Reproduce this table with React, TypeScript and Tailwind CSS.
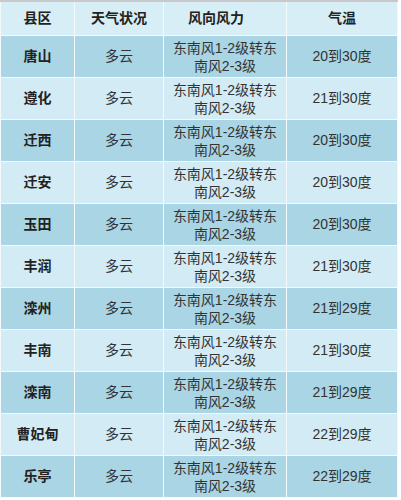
import React from "react";

const rows: [string, string, string][] = [
  ["唐山", "多云", "20到30度"],
  ["遵化", "多云", "21到30度"],
  ["迁西", "多云", "20到30度"],
  ["迁安", "多云", "20到30度"],
  ["玉田", "多云", "20到30度"],
  ["丰润", "多云", "21到30度"],
  ["滦州", "多云", "21到29度"],
  ["丰南", "多云", "21到30度"],
  ["滦南", "多云", "21到29度"],
  ["曹妃甸", "多云", "22到29度"],
  ["乐亭", "多云", "22到29度"],
];

export default function App() {
  return (
    <div
      className="w-[401px] h-[500px] bg-white overflow-hidden"
      style={{ fontFamily: '"Liberation Sans", "Noto Sans CJK SC", sans-serif' }}
    >
      <div className="w-[398px] border-t-2 border-[#c9c9c9] bg-[#f4f9fb] grid grid-cols-[73px_88px_122px_110px] gap-px p-px pt-0 text-[14px] text-[#333]">
        <div className="h-[33px] bg-[#d8eef6] flex items-center justify-center font-bold text-[#222]">县区</div>
        <div className="h-[33px] bg-[#d8eef6] flex items-center justify-center font-bold text-[#222]">天气状况</div>
        <div className="h-[33px] bg-[#d8eef6] flex items-center justify-center font-bold text-[#222] pr-[18px]">风向风力</div>
        <div className="h-[33px] bg-[#d8eef6] flex items-center justify-center font-bold text-[#222]">气温</div>
        {rows.map(([name, weather, temp], i) => {
          const bg = i % 2 === 0 ? "bg-[#a9d5e4]" : "bg-[#d3ebf4]";
          return (
            <React.Fragment key={name}>
              <div className={`h-[41px] ${bg} flex items-center justify-center font-bold text-[#222]`}>{name}</div>
              <div className={`h-[41px] ${bg} flex items-center justify-center`}>{weather}</div>
              <div className={`h-[41px] ${bg} flex flex-col items-center justify-center leading-[18px]`}>
                <span>东南风1-2级转东</span>
                <span>南风2-3级</span>
              </div>
              <div className={`h-[41px] ${bg} flex items-center justify-center`}>{temp}</div>
            </React.Fragment>
          );
        })}
      </div>
    </div>
  );
}
